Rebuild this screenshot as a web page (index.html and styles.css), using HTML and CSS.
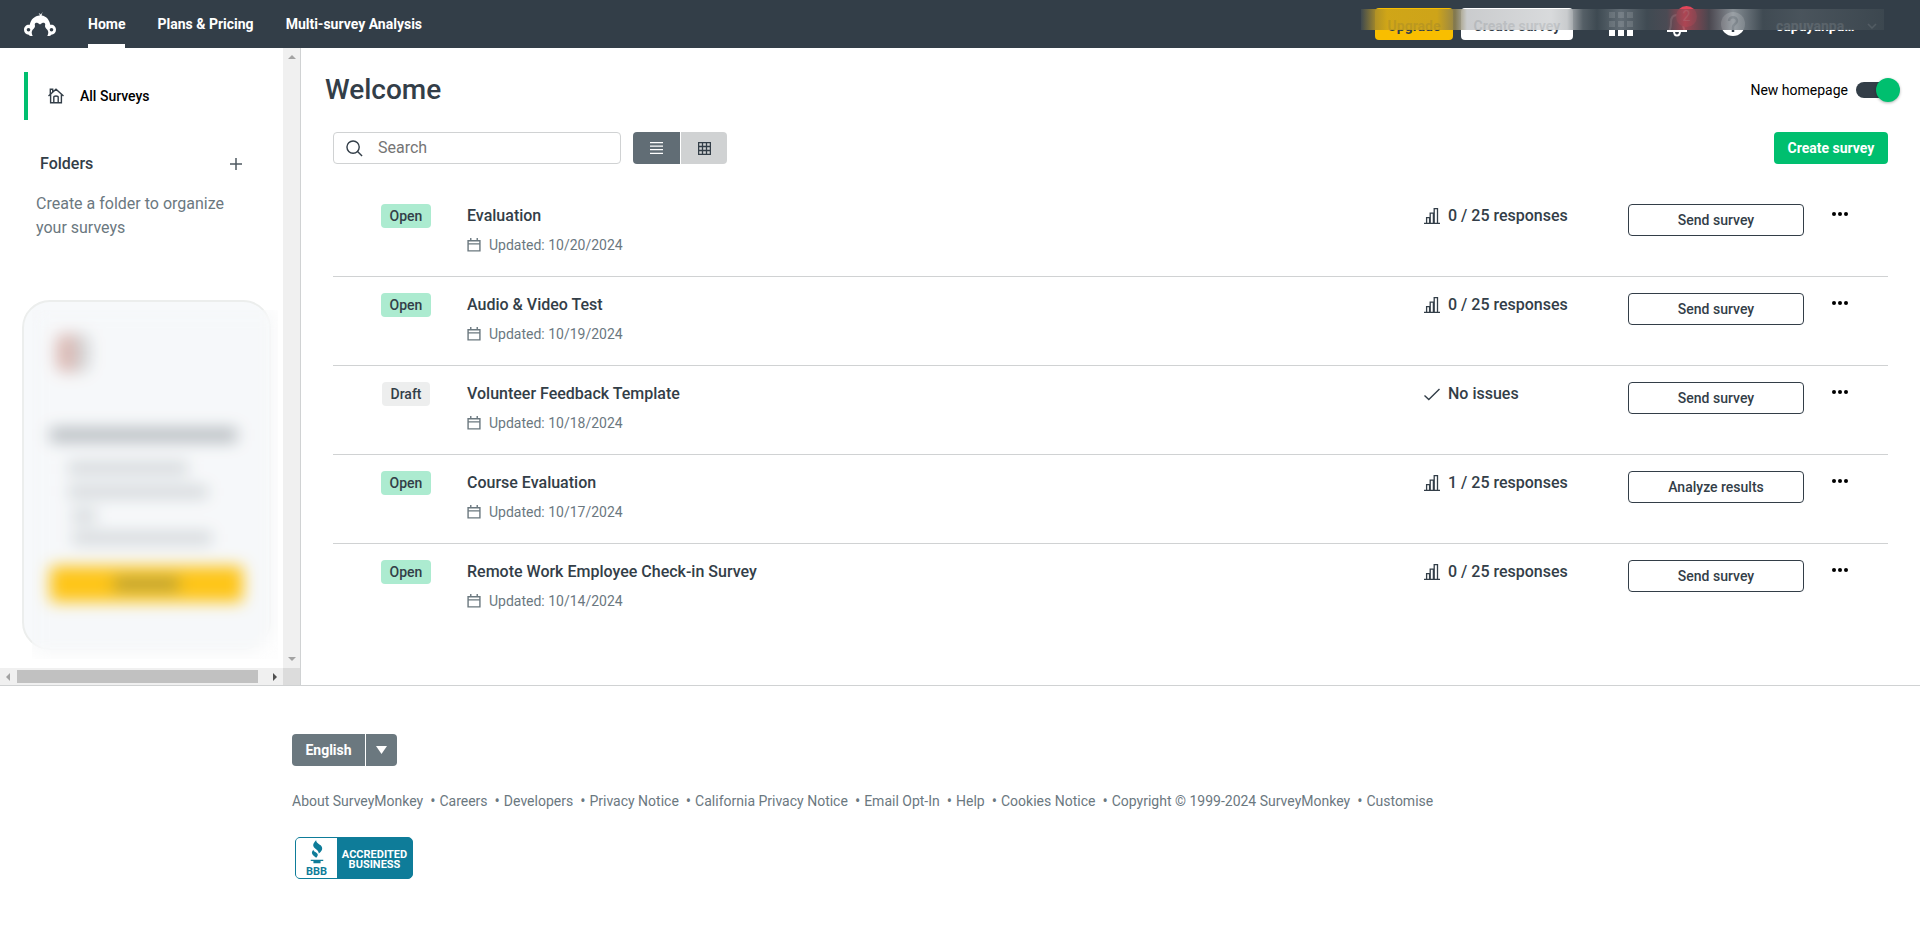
FILE: index.html
```html
<!DOCTYPE html>
<html lang="en">
<head>
<meta charset="utf-8">
<title>Home</title>
<link rel="stylesheet" href="styles.css">
</head>
<body>
<svg class="sprite" aria-hidden="true">
  <symbol id="i-cal" viewBox="0 0 13 13"><path d="M1 2.5h11v9.500H1zM1 5.500h11M3.500 0v2.500M9.500 0v2.500" fill="none" stroke="currentColor" stroke-width="1.300"/></symbol>
  <symbol id="i-bars" viewBox="0 0 16 16"><path d="M0 15.400h16M2.600 15V9.600h3V15M6.200 15V5.200h3.200V15M10.200 15V.7h3.300V15" fill="none" stroke="currentColor" stroke-width="1.300"/></symbol>
  <symbol id="i-check" viewBox="0 0 16 16"><path d="M.5 9.500l4.300 4L15.500 3" fill="none" stroke="currentColor" stroke-width="1.400"/></symbol>
  <symbol id="i-dots" viewBox="0 0 16 4"><circle cx="2" cy="2" r="2"/><circle cx="8" cy="2" r="2"/><circle cx="14" cy="2" r="2"/></symbol>
</svg>

<header class="topbar">
  <a class="logo" href="#" aria-label="SurveyMonkey">
    <svg viewBox="0 0 32 24" width="32" height="24"><path fill="#fff" d="M18.8 0c-.5.8-1.500 1.700-2 2.500-.4-.6-1.200-1.200-2.200-1 .8.500 1.100 1.100 1.200 2-5 .2-9.300 4-10 9.300C2.500 12.300 0 14.500 0 17.800c0 2.900 2 4.700 4.700 4.900.5.900 2 1.400 4 1.300-.9-1.700-1.300-3-.7-5 .5-1.500 3-2.700 3-4.700 0-1-.4-1.700-.2-2.300.3-1 1.700-1.500 2.900-1 1 .4 1.700 1 2.300 1.600.6-.6 1.300-1.200 2.300-1.600 1.200-.5 2.600 0 2.900 1 .2.600-.2 1.300-.2 2.300 0 2 2.500 3.200 3 4.700.6 2 .2 3.300-.7 5 2 .1 3.500-.4 4-1.300 2.700-.2 4.700-2 4.700-4.900 0-3.300-2.500-5.500-5.800-5-.7-5.200-4.200-8.700-8.600-9.200.1-1.100.5-2.300 1.200-3.600z"/><circle cx="4.500" cy="17.700" r="1.800" fill="#333e48"/><circle cx="27.500" cy="17.700" r="1.800" fill="#333e48"/></svg>
  </a>
  <nav class="mainnav">
    <a class="active" href="#">Home</a>
    <a href="#">Plans &amp; Pricing</a>
    <a href="#">Multi-survey Analysis</a>
  </nav>
  <div class="tools">
    <button class="btn upgrade">Upgrade</button>
    <button class="btn create-top">Create survey</button>
    <button class="icon apps" aria-label="Apps"><svg width="24" height="24" viewBox="0 0 24 24" fill="#fff"><path d="M0 0h6v6H0zM9 0h6v6H9zM18 0h6v6h-6zM0 9h6v6H0zM9 9h6v6H9zM18 9h6v6h-6zM0 18h6v6H0zM9 18h6v6H9zM18 18h6v6h-6z"/></svg></button>
    <button class="icon bell" aria-label="Notifications"><svg width="24" height="26" viewBox="0 0 24 26" fill="none" stroke="#fff" stroke-width="2"><path d="M2 20h20M4 20c2-3 2-5 2-9 0-4 2-7 6-7s6 3 6 7c0 4 0 6 2 9M9 20c0 6 6 6 6 0"/></svg><span class="count">2</span></button>
    <button class="icon help" aria-label="Help"><svg width="24" height="24" viewBox="0 0 24 24"><circle cx="12" cy="12" r="12" fill="#fff"/><path d="M8 9c0-5 8-5 8 0 0 3-4 3-4 6v5" fill="none" stroke="#333e48" stroke-width="2.500"/></svg></button>
    <button class="icon user">capuyanpa… <svg width="10" height="6" viewBox="0 0 10 6"><path d="M1 1l4 4 4-4" fill="none" stroke="#fff" stroke-width="1.500"/></svg></button>
    <div class="veil"></div>
  </div>
</header>

<div class="layout">
  <aside class="sidebar">
    <div class="side-content">
      <a class="all" href="#"><svg width="16" height="16" viewBox="0 0 16 16" fill="none" stroke="#333e48" stroke-width="1.400"><path d="M.5 8L8 1.200 15.500 8M2.600 6.500v8.300h10.800V6.500M5.800 14.500V9.200c0-1.600 4.400-1.600 4.400 0v5.300M2.300 6V1.200h2.400v2.500"/></svg>All Surveys</a>
      <div class="folders"><h2>Folders</h2><button class="plus" aria-label="Add folder"><svg width="12" height="12" viewBox="0 0 12 12"><path d="M6 0v12M0 6h12" stroke="#4f5962" stroke-width="1.500"/></svg></button></div>
      <p class="hint">Create a folder to organize your surveys</p>
      <div class="promo">
        <div class="pic"></div>
        <div class="bar head"></div>
        <div class="bar b1"></div>
        <div class="bar b2"></div>
        <div class="bar b3"></div>
        <div class="bar b4"></div>
        <div class="cta"><div class="cta-label"></div></div>
        <div class="haze"></div>
      </div>
    </div>
    <div class="vscroll"><i class="up"></i><i class="down"></i></div>
    <div class="hscroll"><i class="left"></i><div class="thumb"></div><i class="right"></i></div>
    <div class="corner"></div>
  </aside>

  <main class="main">
    <div class="titlebar">
      <h1>Welcome</h1>
      <label class="toggle">New homepage <input type="checkbox" role="switch" checked></label>
    </div>
    <div class="toolbar">
      <label class="search"><svg width="17" height="17" viewBox="0 0 18 18" fill="none" stroke="#333e48" stroke-width="1.500"><circle cx="7.500" cy="7.500" r="6.500"/><path d="M12 12l5 5"/></svg><input type="text" placeholder="Search" aria-label="Search"></label>
      <div class="views">
        <button class="on" aria-label="List view"><svg width="13" height="12" viewBox="0 0 13 12"><path d="M0 .7h13M0 4.200h13M0 7.700h13M0 11.300h13" stroke="#fff" stroke-width="1.200"/></svg></button>
        <button aria-label="Grid view"><svg width="13" height="13" viewBox="0 0 13 13"><path d="M.6.6h11.800v11.800H.6zM4.500.6v11.800M8.500.6v11.800M.6 4.500h11.800M.6 8.500h11.800" fill="none" stroke="#333e48" stroke-width="1.300"/></svg></button>
      </div>
      <button class="btn create">Create survey</button>
    </div>

    <ul class="surveys">
      <li><div><span class="badge">Open</span></div><div class="info"><a href="#">Evaluation</a><p><svg><use href="#i-cal"/></svg>Updated: 10/20/2024</p></div><div class="status"><svg><use href="#i-bars"/></svg>0 / 25 responses</div><button class="action">Send survey</button><button class="more" aria-label="More"><svg><use href="#i-dots"/></svg></button></li>
      <li><div><span class="badge">Open</span></div><div class="info"><a href="#">Audio &amp; Video Test</a><p><svg><use href="#i-cal"/></svg>Updated: 10/19/2024</p></div><div class="status"><svg><use href="#i-bars"/></svg>0 / 25 responses</div><button class="action">Send survey</button><button class="more" aria-label="More"><svg><use href="#i-dots"/></svg></button></li>
      <li><div><span class="badge draft">Draft</span></div><div class="info"><a href="#">Volunteer Feedback Template</a><p><svg><use href="#i-cal"/></svg>Updated: 10/18/2024</p></div><div class="status"><svg><use href="#i-check"/></svg>No issues</div><button class="action">Send survey</button><button class="more" aria-label="More"><svg><use href="#i-dots"/></svg></button></li>
      <li><div><span class="badge">Open</span></div><div class="info"><a href="#">Course Evaluation</a><p><svg><use href="#i-cal"/></svg>Updated: 10/17/2024</p></div><div class="status"><svg><use href="#i-bars"/></svg>1 / 25 responses</div><button class="action">Analyze results</button><button class="more" aria-label="More"><svg><use href="#i-dots"/></svg></button></li>
      <li><div><span class="badge">Open</span></div><div class="info"><a href="#">Remote Work Employee Check-in Survey</a><p><svg><use href="#i-cal"/></svg>Updated: 10/14/2024</p></div><div class="status"><svg><use href="#i-bars"/></svg>0 / 25 responses</div><button class="action">Send survey</button><button class="more" aria-label="More"><svg><use href="#i-dots"/></svg></button></li>
    </ul>
  </main>
</div>

<footer class="footer">
  <div class="lang"><button>English</button><button aria-label="Choose language"><svg width="11" height="8" viewBox="0 0 11 8"><path d="M0 0h11L5.500 8z" fill="#fff"/></svg></button></div>
  <ul class="links">
    <li><a href="#">About SurveyMonkey</a></li>
    <li><a href="#">Careers</a></li>
    <li><a href="#">Developers</a></li>
    <li><a href="#">Privacy Notice</a></li>
    <li><a href="#">California Privacy Notice</a></li>
    <li><a href="#">Email Opt-In</a></li>
    <li><a href="#">Help</a></li>
    <li><a href="#">Cookies Notice</a></li>
    <li><a href="#">Copyright © 1999-2024 SurveyMonkey</a></li>
    <li><a href="#">Customise</a></li>
  </ul>
  <a class="bbb" href="#">
    <span class="bbb-mark"><svg width="18" height="25" viewBox="0 0 20 28" fill="#0e7c99"><path d="M9 0c-1 2-4 4-3 7 1 3 6 4 6 8 3-2 5-5 3-8-1-2-6-3-6-7z"/><path d="M6 11c-3 3-2 5 3 9 2-2 3-4 0-6-1-1-3-1-3-3zM3 22h14v1.500h-3V26H6v-2.500H3z"/></svg><b>BBB</b></span>
    <span class="bbb-text"><span>ACCREDITED</span><span>BUSINESS</span></span>
  </a>
</footer>
</body>
</html>
```
FILE: styles.css
```css
* { box-sizing: border-box; }
body { margin: 0; background: #fff; color: #333e48; font: 14px/20px Roboto, "Noto Sans", sans-serif; }
button { font: inherit; color: inherit; border: 0; padding: 0; background: none; cursor: pointer; }
a { color: inherit; text-decoration: none; }
h1, h2, p, ul { margin: 0; padding: 0; }
ul { list-style: none; }
svg { display: block; flex: none; }
.sprite { position: absolute; width: 0; height: 0; }

.topbar { display: flex; align-items: center; height: 48px; padding: 0 36px 0 24px; background: #333e48; color: #fff; }
.logo { margin-right: 32px; }
.mainnav { display: flex; gap: 32px; font-weight: 700; align-self: stretch; }
.mainnav a { display: flex; align-items: center; border-top: 4px solid transparent; border-bottom: 4px solid transparent; }
.mainnav .active { border-bottom-color: #fff; }
.tools { position: relative; display: flex; align-items: center; height: 48px; margin-left: auto; padding-left: 14px; }
.btn { height: 32px; border-radius: 4px; font-weight: 700; padding: 0 12px; }
.upgrade { width: 78px; background: #f9be00; color: #333e48; }
.create-top { width: 112px; margin-left: 8px; background: #fff; color: #333e48; }
.tools .btn { padding-top: 3px; }
.icon { display: flex; align-items: center; gap: 12px; }
.apps { margin-left: 36px; }
.bell { position: relative; margin-left: 32px; }
.count { position: absolute; left: 11px; top: -5px; width: 21px; height: 21px; border-radius: 50%; background: #e3465a; color: #fff; line-height: 21px; text-align: center; }
.help { margin-left: 32px; }
.user { width: 108px; margin-left: 31px; padding-top: 3px; font-weight: 700; }
.veil {
  position: absolute; left: 0; right: 0; top: 9px; height: 21px; opacity: .9;
  background: linear-gradient(90deg, #3f4a50 0, #a88c2a 14px, #cba31a 26px, #c9a11c 76px, #8b7f50 94px, #c4c6c8 106px, #d4d6d8 190px, #c3c6c8 206px, #59636a 222px, #3f4b53 236px, #68727a 260px, #414c54 286px, #4d4c55 306px, #a84552 324px, #4d4850 348px, #8f969c 372px, #414c54 402px, #4c565e 440px, #3d4850 523px);
}

.layout { display: grid; grid-template-columns: 301px 1fr; border-bottom: 1px solid #d0d2d3; }
.sidebar { display: grid; grid-template-columns: 1fr 17px; grid-template-rows: 1fr 17px; border-right: 1px solid #d0d2d3; }
.side-content { padding: 24px 4px 8px 22px; }
.all { display: flex; align-items: center; gap: 16px; height: 48px; margin-left: 2px; padding-left: 20px; border-left: 4px solid #00bf6f; color: #000; font-weight: 500; }
.folders { display: flex; align-items: center; justify-content: space-between; margin-top: 32px; padding: 0 37px 0 18px; height: 24px; }
.folders h2 { font-size: 16px; font-weight: 500; }
.hint { margin: 16px 40px 0 14px; font-size: 16px; line-height: 24px; color: #6b787f; }
.promo { position: relative; height: 350px; margin: 60px 8px 0 0; padding: 32px 26px; border: 2px solid #eceeed; border-radius: 28px; background: #f7f9fb; }
.pic { width: 34px; height: 38px; margin-left: 6px; border-radius: 8px; background: linear-gradient(90deg, #d9b4ae 60%, #cfd0d1 60%); }
.bar { height: 12px; background: #a4abb0; opacity: .5; }
.head { height: 14px; margin: 56px 6px 0 0; opacity: .9; }
.b1 { width: 120px; margin: 20px 0 0 18px; }
.b2 { width: 140px; margin: 12px 0 0 18px; }
.b3 { width: 24px; margin: 12px 0 0 22px; }
.b4 { width: 140px; margin: 10px 0 0 22px; }
.cta { height: 36px; margin-top: 22px; padding: 12px 64px; background: #ffc000; border-radius: 4px; }
.cta-label { height: 12px; background: #aa9428; }
.haze { position: absolute; left: 8px; right: -9px; top: 8px; bottom: -11px; background: rgba(246, 247, 249, .1); backdrop-filter: blur(8px); }
.vscroll { display: flex; flex-direction: column; justify-content: space-between; align-items: center; padding: 7px 0; background: #f0f0f0; }
.hscroll { display: flex; align-items: center; padding: 0 6px; background: #f0f0f0; }
.thumb { flex: 1; height: 13px; margin: 0 15px 0 7px; background: #c1c1c1; }
.corner { background: #dcdcdc; }
.up, .down, .left, .right { width: 0; height: 0; border: 4px solid transparent; }
.up { border-top: 0; border-bottom-color: #a3a3a3; }
.down { border-bottom: 0; border-top-color: #a3a3a3; }
.left { border-left: 0; border-right-color: #a3a3a3; }
.right { border-right: 0; border-left-color: #505050; }

.main { padding: 24px 20px 0 24px; }
.titlebar { display: flex; justify-content: space-between; align-items: center; height: 36px; }
h1 { font-size: 28px; line-height: 36px; font-weight: 500; }
.toggle { display: flex; align-items: center; gap: 8px; color: #000; }
.toggle input { appearance: none; position: relative; width: 44px; height: 24px; margin: 0; }
.toggle input::before { content: ""; position: absolute; left: 0; right: 4px; top: 4px; height: 16px; border-radius: 8px; background: #333e48; }
.toggle input::after { content: ""; position: absolute; right: 0; top: 0; width: 24px; height: 24px; border-radius: 50%; background: #00bf6f; box-shadow: 0 1px 3px rgba(0, 0, 0, .3); }
.toolbar { display: flex; margin: 24px 12px 24px 8px; }
.search { display: flex; align-items: center; gap: 15px; width: 288px; height: 32px; padding: 0 12px; border: 1px solid #d0d2d3; border-radius: 4px; }
.search input { flex: 1; min-width: 0; border: 0; outline: 0; padding: 0; background: none; font: inherit; font-size: 16px; color: #333e48; }
.search input::placeholder { color: #757575; }
.views { display: flex; gap: 1px; margin-left: 12px; }
.views button { display: grid; place-items: center; width: 46px; height: 32px; border-radius: 0 4px 4px 0; background: #d0d2d3; }
.views .on { width: 47px; border-radius: 4px 0 0 4px; background: #616d75; }
.create { width: 114px; margin-left: auto; background: #00bf6f; color: #fff; }

.surveys { margin: 0 12px 0 8px; padding-bottom: 52px; }
.surveys li { display: grid; grid-template-columns: 86px 1fr 204px 176px 84px; align-items: start; min-height: 89px; padding: 16px 0 16px 48px; border-bottom: 1px solid #d0d2d3; }
.surveys li:last-child { border-bottom: 0; }
.badge { display: block; width: 50px; height: 24px; border-radius: 4px; background: #acebd0; font-weight: 500; line-height: 24px; text-align: center; }
.draft { width: 48px; margin-left: 1px; background: #edeeee; }
.info a, .status { font-size: 16px; line-height: 24px; font-weight: 500; }
.info a { display: block; }
.info p { display: flex; align-items: center; gap: 8px; margin-top: 7px; color: #6b787f; }
.info svg { width: 14px; height: 14px; }
.status { display: flex; align-items: center; gap: 8px; }
.status svg { width: 16px; height: 16px; }
.action { height: 32px; border: 1px solid #333e48; border-radius: 4px; font-weight: 500; }
.more { justify-self: start; margin-left: 28px; height: 20px; color: #000; }
.more svg { width: 16px; height: 4px; }

.footer { padding: 48px 36px 64px 292px; color: #6b787f; }
.lang { display: flex; gap: 1px; color: #fff; font-weight: 700; }
.lang button { display: grid; place-items: center; width: 73px; height: 32px; background: #6b787f; border-radius: 4px 0 0 4px; }
.lang button + button { width: 31px; border-radius: 0 4px 4px 0; }
.links { display: flex; flex-wrap: wrap; margin-top: 25px; }
.links li + li::before { content: "•"; margin: 0 4px 0 7px; font-family: "Noto Sans", sans-serif; line-height: 1; }
.bbb { display: flex; width: 118px; height: 42px; margin: 26px 0 0 3px; border: 1px solid #0e7c99; border-radius: 5px; background: #0e7c99; }
.bbb-mark { display: flex; flex-direction: column; align-items: center; width: 41px; padding-top: 2px; border-radius: 4px 0 0 4px; background: #fff; color: #0e7c99; font-size: 11px; line-height: 13px; }
.bbb-text { display: flex; flex: 1; flex-direction: column; align-items: center; justify-content: center; padding-top: 4px; color: #fff; font-size: 11px; line-height: 10px; font-weight: 700; }
.bbb-text span { line-height: 10px; }
```
